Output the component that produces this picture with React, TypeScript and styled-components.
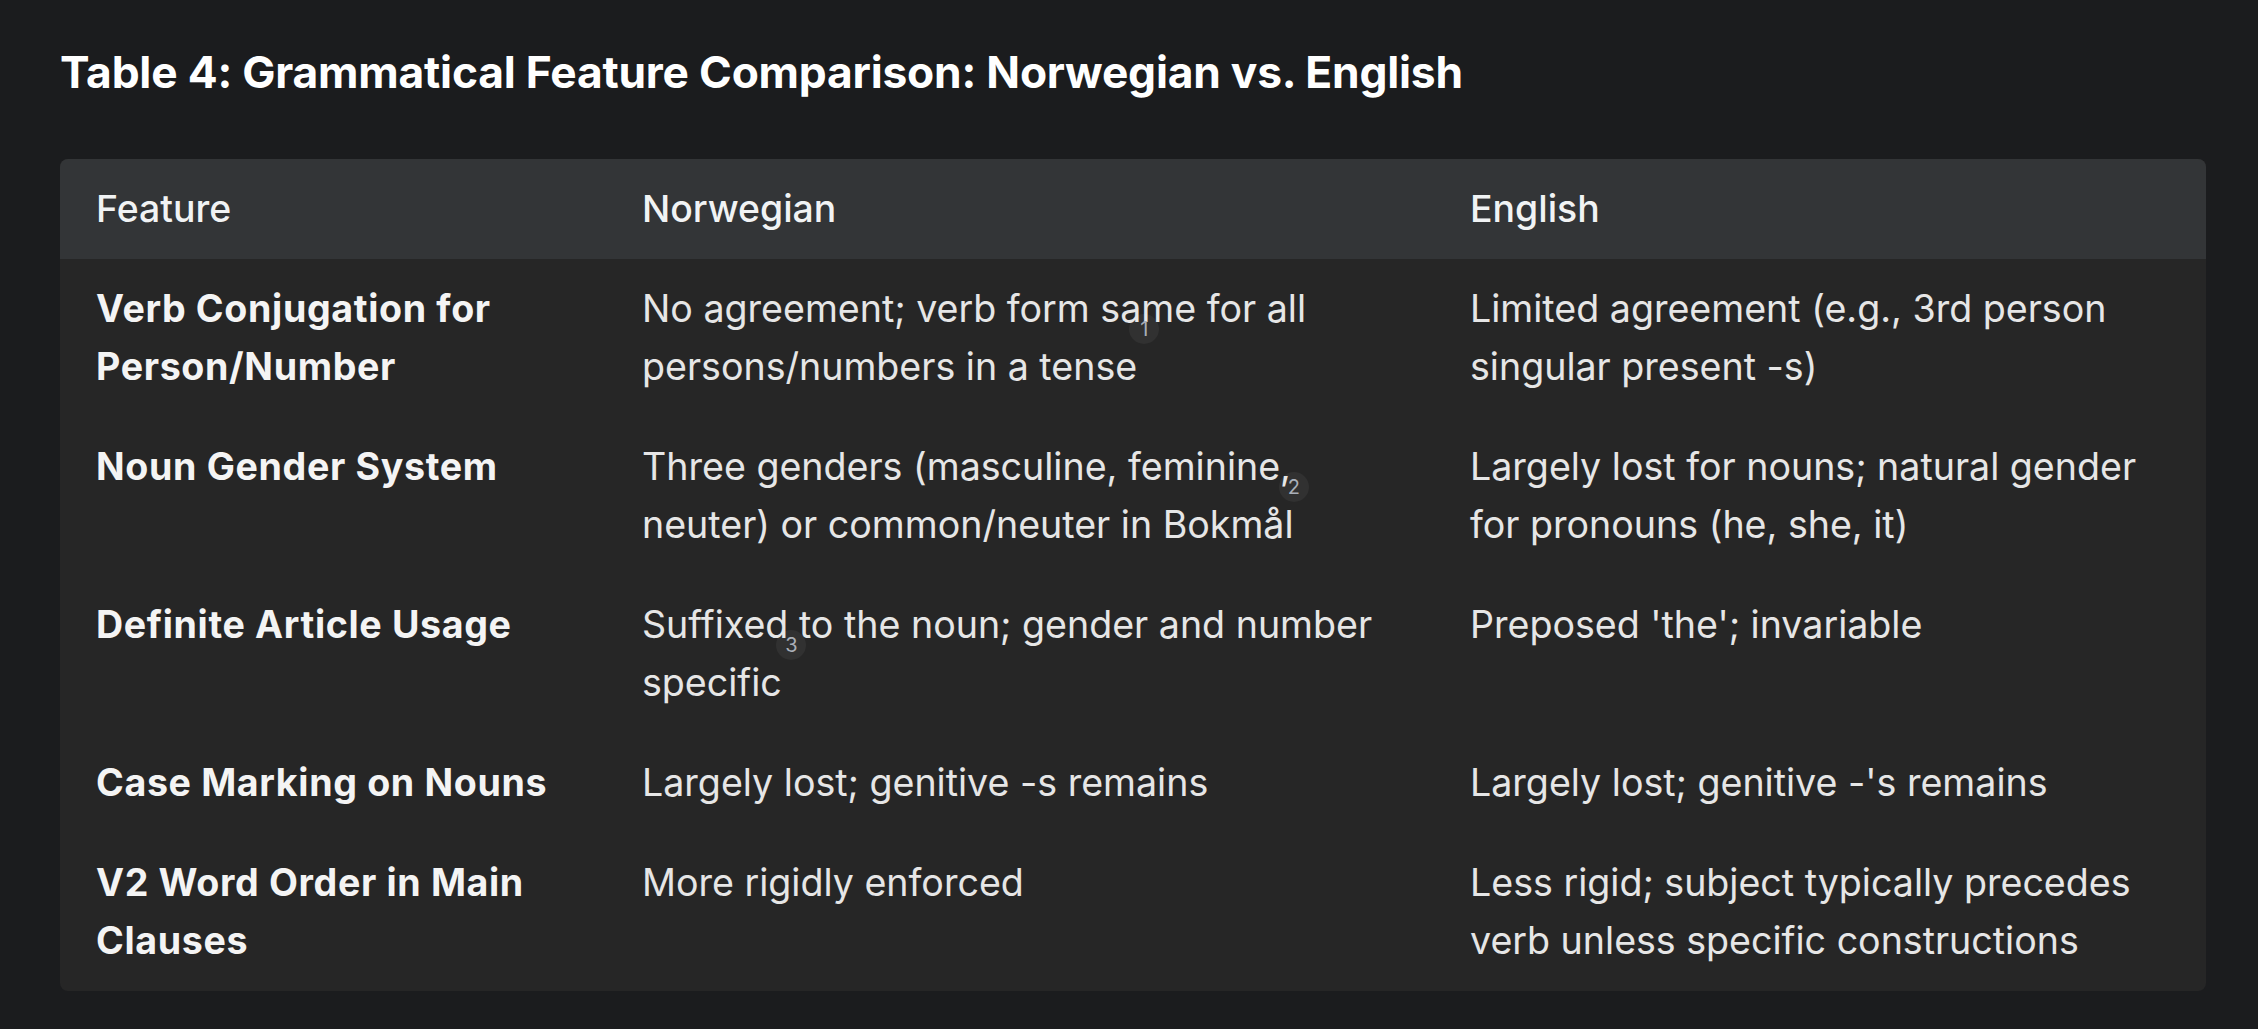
import React from "react";
import styled, { createGlobalStyle } from "styled-components";

const GlobalStyle = createGlobalStyle`
  html, body {
    margin: 0;
    padding: 0;
    background: #1b1c1e;
  }
  body {
    font-family: Inter, "Noto Sans", Roboto, sans-serif;
    color: #e3e3e3;
    -webkit-font-smoothing: antialiased;
  }
  * { box-sizing: border-box; }
`;

const Page = styled.main`
  width: 2258px;
  padding: 42px 52px 0 60px;
`;

const Title = styled.h2`
  margin: 0;
  font-size: 44.3px;
  line-height: 60px;
  font-weight: 700;
  color: #ffffff;
  letter-spacing: -0.2px;
`;

const TableWrap = styled.div`
  margin-top: 57px;
  border-radius: 8px;
  overflow: hidden;
  background: #262626;
`;

const Table = styled.table`
  width: 100%;
  border-collapse: collapse;
  table-layout: fixed;
`;

const HeadRow = styled.tr`
  background: #333537;
`;

const HeadCell = styled.th`
  text-align: left;
  padding: 21px 36px;
  font-size: 37.4px;
  line-height: 58px;
  font-weight: 500;
  color: #f1f3f4;
`;

const Cell = styled.td<{ $strong?: boolean }>`
  vertical-align: top;
  padding: 21px 36px;
  font-size: 37.6px;
  line-height: 58px;
  font-weight: ${(p) => (p.$strong ? 700 : 400)};
  letter-spacing: ${(p) => (p.$strong ? "0.65px" : "0")};
  color: ${(p) => (p.$strong ? "#f4f4f4" : "#e6e6e6")};
`;

const CiteAnchor = styled.span`
  position: relative;
  display: inline-block;
  width: 0;
  height: 0;
  vertical-align: baseline;
`;

const CiteBadge = styled.span`
  position: absolute;
  left: -12px;
  top: -8px;
  width: 30px;
  height: 30px;
  border-radius: 50%;
  background: rgba(255, 255, 255, 0.05);
  color: #a9afb8;
  font-size: 20px;
  line-height: 30px;
  font-weight: 400;
  letter-spacing: 0;
  text-align: center;
`;

const Cite = ({ n }: { n: number }) => (
  <CiteAnchor>
    <CiteBadge>{n}</CiteBadge>
  </CiteAnchor>
);

type Row = {
  feature: string;
  norwegian: React.ReactNode;
  english: string;
};

const rows: Row[] = [
  {
    feature: "Verb Conjugation for Person/Number",
    norwegian: (
      <>
        No agreement; verb form sa
        <Cite n={1} />
        me for all persons/numbers in a tense
      </>
    ),
    english: "Limited agreement (e.g., 3rd person singular present -s)",
  },
  {
    feature: "Noun Gender System",
    norwegian: (
      <>
        Three genders (masculine, feminine,
        <Cite n={2} /> neuter) or common/neuter in Bokmål
      </>
    ),
    english: "Largely lost for nouns; natural gender for pronouns (he, she, it)",
  },
  {
    feature: "Definite Article Usage",
    norwegian: (
      <>
        Suffixed
        <Cite n={3} /> to the noun; gender and number specific
      </>
    ),
    english: "Preposed 'the'; invariable",
  },
  {
    feature: "Case Marking on Nouns",
    norwegian: "Largely lost; genitive -s remains",
    english: "Largely lost; genitive -'s remains",
  },
  {
    feature: "V2 Word Order in Main Clauses",
    norwegian: "More rigidly enforced",
    english: "Less rigid; subject typically precedes verb unless specific constructions",
  },
];

export default function App() {
  return (
    <>
      <GlobalStyle />
      <Page>
        <Title>Table 4: Grammatical Feature Comparison: Norwegian vs. English</Title>
        <TableWrap>
          <Table>
            <colgroup>
              <col style={{ width: "546px" }} />
              <col style={{ width: "828px" }} />
              <col />
            </colgroup>
            <thead>
              <HeadRow>
                <HeadCell>Feature</HeadCell>
                <HeadCell>Norwegian</HeadCell>
                <HeadCell>English</HeadCell>
              </HeadRow>
            </thead>
            <tbody>
              {rows.map((r) => (
                <tr key={r.feature}>
                  <Cell $strong>{r.feature}</Cell>
                  <Cell>{r.norwegian}</Cell>
                  <Cell>{r.english}</Cell>
                </tr>
              ))}
            </tbody>
          </Table>
        </TableWrap>
      </Page>
    </>
  );
}
